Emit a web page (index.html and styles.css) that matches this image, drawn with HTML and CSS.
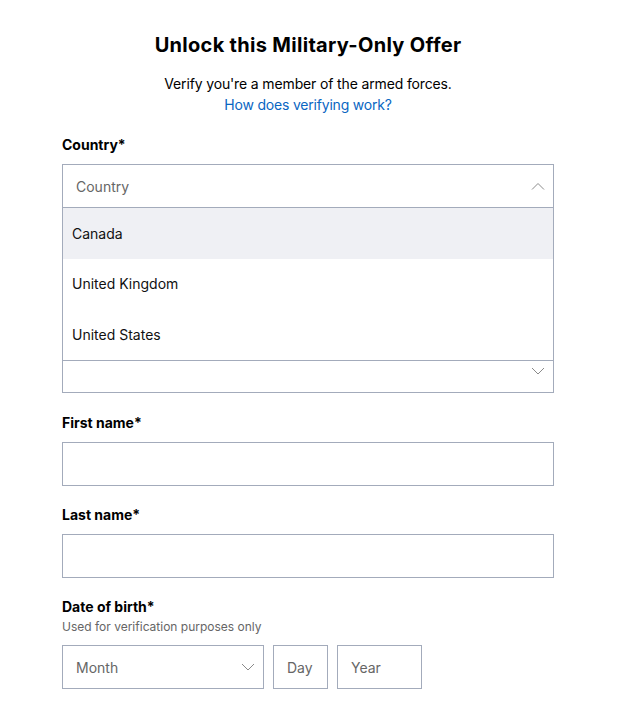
FILE: index.html
```
<!DOCTYPE html>
<html lang="en">
<head>
<meta charset="utf-8">
<title>Unlock this Military-Only Offer</title>
<link rel="stylesheet" href="styles.css">
</head>
<body>
<main class="page">
  <header class="intro">
    <h1 class="title">Unlock this Military-Only Offer</h1>
    <p class="subtitle">Verify you're a member of the armed forces.</p>
    <a class="help-link" href="#">How does verifying work?</a>
  </header>

  <form class="form">
    <div class="field field-country">
      <label class="label">Country*</label>
      <div class="select-wrap">
        <div class="select select-open">
          <span class="placeholder">Country</span>
          <svg class="chev" width="14" height="8" viewBox="0 0 14 8"><path d="M1 7.5 L7 1.5 L13 7.5" fill="none" stroke="#8a8a8a" stroke-width="1"/></svg>
        </div>
        <ul class="dropdown">
          <li class="option option-active">Canada</li>
          <li class="option">United Kingdom</li>
          <li class="option">United States</li>
        </ul>
      </div>
    </div>

    <div class="field field-gap">
      <span class="label label-spacer"></span>
      <div class="select">
        <span class="placeholder"></span>
        <svg class="chev" width="14" height="8" viewBox="0 0 14 8"><path d="M1 1 L7 7 L13 1" fill="none" stroke="#8a8a8a" stroke-width="1"/></svg>
      </div>
    </div>

    <div class="field field-gap">
      <span class="label label-spacer"></span>
      <div class="select">
        <span class="placeholder"></span>
        <svg class="chev" width="14" height="8" viewBox="0 0 14 8"><path d="M1 1 L7 7 L13 1" fill="none" stroke="#8a8a8a" stroke-width="1"/></svg>
      </div>
    </div>

    <div class="field">
      <label class="label">First name*</label>
      <div class="input"></div>
    </div>

    <div class="field">
      <label class="label">Last name*</label>
      <div class="input"></div>
    </div>

    <div class="field">
      <label class="label label-tight">Date of birth*</label>
      <p class="hint">Used for verification purposes only</p>
      <div class="dob">
        <div class="select select-month">
          <span class="placeholder">Month</span>
          <svg class="chev" width="14" height="8" viewBox="0 0 14 8"><path d="M1 1 L7 7 L13 1" fill="none" stroke="#8a8a8a" stroke-width="1"/></svg>
        </div>
        <div class="input input-day"><span class="placeholder">Day</span></div>
        <div class="input input-year"><span class="placeholder">Year</span></div>
      </div>
    </div>
  </form>
</main>
</body>
</html>
```
FILE: styles.css
```
* { box-sizing: border-box; }

body {
  margin: 0;
  background: #fff;
  color: #000;
  font-family: Inter, "Noto Sans", "Liberation Sans", sans-serif;
  font-size: 14px;
}

.page {
  width: 492px;
  margin-left: 62px;
  padding-top: 33px;
}

.intro {
  text-align: center;
}

.title {
  margin: 0;
  font-size: 20px;
  line-height: 24px;
  font-weight: 700;
  letter-spacing: 0.3px;
}

.subtitle {
  margin: 16px 0 0;
  line-height: 21px;
  color: #000;
  letter-spacing: -0.14px;
}

.help-link {
  display: block;
  line-height: 21px;
  color: #0a66c2;
  text-decoration: none;
  letter-spacing: -0.2px;
}

.form {
  margin-top: 20px;
}

.field {
  margin-bottom: 19px;
}

.field-gap {
  margin-bottom: 20px;
}

.field-country {
  position: relative;
  z-index: 2;
}

.label {
  display: block;
  font-weight: 700;
  line-height: 20px;
  height: 20px;
  margin-bottom: 9px;
}

.label-tight {
  margin-bottom: 0;
}

.hint {
  margin: 0 0 8px;
  font-size: 12px;
  line-height: 20px;
  color: #666;
}

.select,
.input {
  height: 44px;
  border: 1px solid #a3abbb;
  background: #fff;
  display: flex;
  align-items: center;
  padding: 0 8px 0 13px;
}

.select {
  justify-content: space-between;
}

.placeholder {
  color: #666;
}

.chev {
  display: block;
}

.select-wrap {
  position: relative;
}

.dropdown {
  position: absolute;
  left: 0;
  right: 0;
  top: 44px;
  margin: 0;
  padding: 0;
  list-style: none;
  background: #fff;
  border: 1px solid #a3abbb;
  border-top: none;
}

.option {
  height: 50.67px;
  display: flex;
  align-items: center;
  padding-left: 9px;
  color: #111;
}

.option-active {
  background: #eff0f4;
}

.dob {
  display: flex;
  gap: 9px;
}

.select-month {
  width: 202px;
}

.input-day {
  width: 55px;
}

.input-year {
  width: 85px;
}
```
